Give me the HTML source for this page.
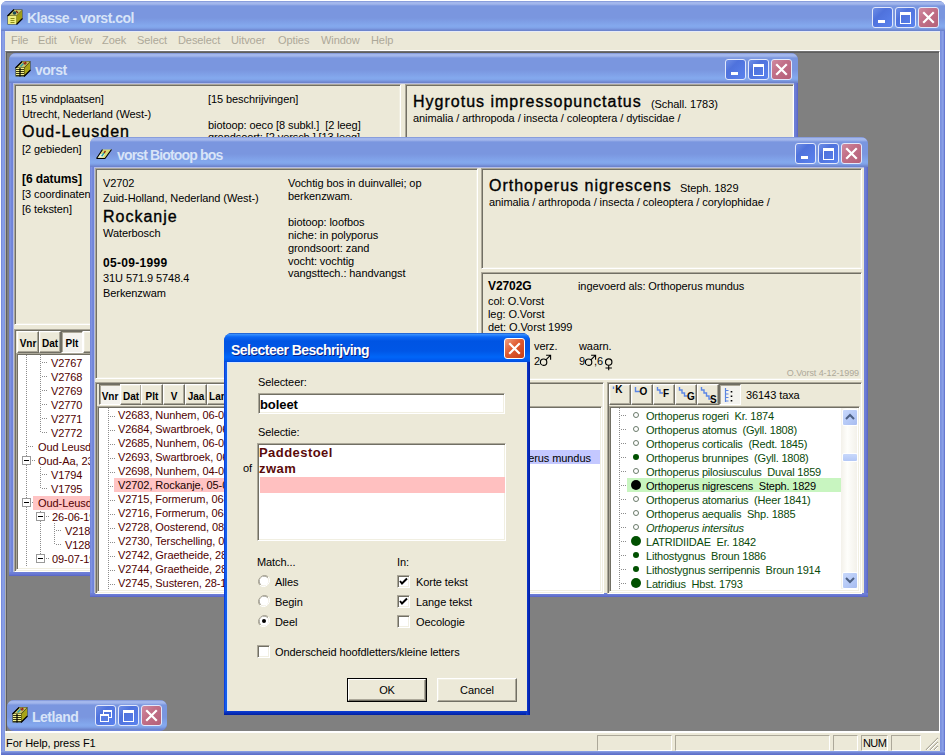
<!DOCTYPE html><html><head><meta charset="utf-8"><style>
*{box-sizing:content-box}
body{margin:0;width:945px;height:755px;overflow:hidden;position:relative;background:#fff;font-family:"Liberation Sans",sans-serif;font-size:11px;color:#000}
.a{position:absolute}
.t{position:absolute;white-space:pre;line-height:14px;font-size:11px;letter-spacing:-0.08px}
.sk{position:absolute;border-style:solid;border-width:1px;border-color:#aca899 #fff #fff #aca899;box-shadow:inset 1px 1px 0 #716f64, inset -1px -1px 0 #f1efe2}
.rb{position:absolute;background:#ece9d8;border-style:solid;border-width:1px;border-color:#fff #716f64 #716f64 #fff;box-shadow:inset -1px -1px 0 #aca899, inset 1px 1px 0 #f1efe2}
.big{font-size:16px;font-weight:normal;line-height:18px;letter-spacing:1px;-webkit-text-stroke:0.35px #000}
.tt{position:absolute;white-space:pre;font-size:14px;font-weight:bold;color:#d8e4f8;line-height:18px;letter-spacing:-0.5px}
</style></head><body><div class="a" style="left:1px;top:1px;width:944px;height:754px;background:linear-gradient(to right,#6f83d6,#8fa5ea 2px,#7b91de 4px,#7b91de 940px,#8fa5ea 942px,#5a6cc8 944px);border-radius:6px 6px 0 0"></div>
<div class="a" style="left:1px;top:1px;width:944px;height:30px;background:linear-gradient(to bottom,#6f84cc 0px,#a3b7ec 1px,#a3b7ec 3px,#7a96df 5px,#7a96df 17px,#84a9ee 25px,#80a2e8 27px,#7089d2 29px,#6a80c8 30px);border-radius:6px 6px 0 0"></div>
<div class="a" style="left:1px;top:751px;width:944px;height:4px;background:linear-gradient(#8fa5ea,#6b7fd0 2px,#5a6cc8)"></div>
<svg class="a" style="left:7px;top:9px" width="16" height="16" viewBox="0 0 16 16"><path d="M0.5 6.5 L6.5 0.5 L15.5 0.5 L15.5 9.5 L9.5 15.5 L0.5 15.5 Z" fill="#4a4a18"/><rect x="1" y="7" width="8.5" height="8" fill="#eeee80"/><path d="M9.5 7 L15 1.5 L15 9.5 L9.5 15 Z" fill="#a09c14"/><path d="M1.5 6.5 L7 1 L15 1 L9.5 6.5 Z" fill="#c8c468"/><path d="M3.5 9.5 H7.5 M3.5 11.5 H7.5 M3.5 13.5 H7.5" stroke="#8c8c18" stroke-width="1"/><circle cx="7.5" cy="4" r="1.8" fill="#1a4a58"/><path d="M9 2 L11 4" stroke="#7a2010" stroke-width="1.2"/><path d="M0.5 7 L7 0.5 M9.5 15.5 L15.5 9.5" stroke="#000" stroke-width="1.2"/></svg>
<div class="tt" style="left:27px;top:9px;">Klasse - vorst.col</div>
<div class="a" style="left:872px;top:7px;width:19px;height:19px;border:1px solid #e2e8fb;border-radius:3px;background:linear-gradient(135deg,#6f8fe6 0%,#4f72dc 35%,#5a82ee 100%)">
<div class="a" style="left:5px;top:12px;width:7px;height:3px;background:#fff"></div>
</div>
<div class="a" style="left:895px;top:7px;width:19px;height:19px;border:1px solid #e2e8fb;border-radius:3px;background:linear-gradient(135deg,#6f8fe6 0%,#4f72dc 35%,#5a82ee 100%)">
<div class="a" style="left:4px;top:4px;width:9px;height:8px;border:1px solid #fff;border-top:3px solid #fff"></div>
</div>
<div class="a" style="left:918px;top:7px;width:19px;height:19px;border:1px solid #e2e8fb;border-radius:3px;background:linear-gradient(135deg,#d08aa0 0%,#c27088 40%,#b56078 100%)">
<svg width="19" height="19" style="position:absolute;left:0;top:0"><path d="M5 5 L14 14 M14 5 L5 14" stroke="#fff" stroke-width="2.2" stroke-linecap="square"/></svg>
</div>
<div class="a" style="left:5px;top:31px;width:935px;height:20px;background:#ece9d8;border-top:1px solid #e6ebf8;border-bottom:1px solid #fff;box-sizing:border-box"></div>
<div class="t" style="left:11px;top:33px;color:#aca899">File</div>
<div class="t" style="left:38px;top:33px;color:#aca899">Edit</div>
<div class="t" style="left:69px;top:33px;color:#aca899">View</div>
<div class="t" style="left:102px;top:33px;color:#aca899">Zoek</div>
<div class="t" style="left:137px;top:33px;color:#aca899">Select</div>
<div class="t" style="left:178px;top:33px;color:#aca899">Deselect</div>
<div class="t" style="left:231px;top:33px;color:#aca899">Uitvoer</div>
<div class="t" style="left:278px;top:33px;color:#aca899">Opties</div>
<div class="t" style="left:321px;top:33px;color:#aca899">Window</div>
<div class="t" style="left:371px;top:33px;color:#aca899">Help</div>
<div class="a" style="left:5px;top:51px;width:935px;height:680px;background:#808080;border-top:1px solid #707070;border-left:1px solid #b0b0b0;border-right:1px solid #fff;box-shadow:inset 1px 1px 0 #5e5e5e;box-sizing:border-box"></div>
<div class="a" style="left:5px;top:731px;width:935px;height:20px;background:#ece9d8;border-top:2px solid #fff;box-sizing:border-box"></div>
<div class="t" style="left:6px;top:736px;">For Help, press F1</div>
<div class="a" style="left:597px;top:735px;width:73px;height:14px;border:1px solid;border-color:#aca899 #fff #fff #aca899"></div>
<div class="a" style="left:675px;top:735px;width:153px;height:14px;border:1px solid;border-color:#aca899 #fff #fff #aca899"></div>
<div class="a" style="left:833px;top:735px;width:23px;height:14px;border:1px solid;border-color:#aca899 #fff #fff #aca899"></div>
<div class="a" style="left:861px;top:735px;width:25px;height:14px;border:1px solid;border-color:#aca899 #fff #fff #aca899"></div>
<div class="a" style="left:891px;top:735px;width:28px;height:14px;border:1px solid;border-color:#aca899 #fff #fff #aca899"></div>
<div class="t" style="left:863px;top:736px;letter-spacing:-0.6px">NUM</div>
<svg class="a" style="left:925px;top:737px" width="14" height="13" viewBox="0 0 14 13"><path d="M13 1 L1 13 M13 5 L5 13 M13 9 L9 13" stroke="#aca899" stroke-width="1.2"/><path d="M13 2 L2 13 M13 6 L6 13 M13 10 L10 13" stroke="#fff" stroke-width="1"/></svg>
<div class="a" style="left:9px;top:53px;width:789px;height:523px;background:#7086da;border-radius:7px 7px 0 0"></div>
<div class="a" style="left:9px;top:53px;width:789px;height:30px;background:linear-gradient(to bottom,#6f84cc 0px,#a3b7ec 1px,#a3b7ec 3px,#7a96df 5px,#7a96df 17px,#84a9ee 25px,#80a2e8 27px,#7089d2 29px,#6a80c8 30px);border-radius:7px 7px 0 0"></div>
<div class="a" style="left:9px;top:83px;width:4px;height:493px;background:linear-gradient(to right,#6070d0,#8a9ee8 1px,#7488dc 2px,#6e82d8 4px)"></div>
<div class="a" style="left:794px;top:83px;width:4px;height:493px;background:linear-gradient(to right,#6e80d8,#6a7ad4 2px,#5864c4 4px)"></div>
<div class="a" style="left:9px;top:572px;width:789px;height:4px;background:linear-gradient(to bottom,#6e80d8,#6a7ad4 2px,#5864c4 4px)"></div>
<div class="a" style="left:771px;top:59px;width:19px;height:19px;border:1px solid #e2e8fb;border-radius:3px;background:linear-gradient(135deg,#d08aa0 0%,#c27088 40%,#b56078 100%)">
<svg width="19" height="19" style="position:absolute;left:0;top:0"><path d="M5 5 L14 14 M14 5 L5 14" stroke="#fff" stroke-width="2.2" stroke-linecap="square"/></svg>
</div>
<div class="a" style="left:748px;top:59px;width:19px;height:19px;border:1px solid #e2e8fb;border-radius:3px;background:linear-gradient(135deg,#6f8fe6 0%,#4f72dc 35%,#5a82ee 100%)">
<div class="a" style="left:4px;top:4px;width:9px;height:8px;border:1px solid #fff;border-top:3px solid #fff"></div>
</div>
<div class="a" style="left:725px;top:59px;width:19px;height:19px;border:1px solid #e2e8fb;border-radius:3px;background:linear-gradient(135deg,#6f8fe6 0%,#4f72dc 35%,#5a82ee 100%)">
<div class="a" style="left:5px;top:12px;width:7px;height:3px;background:#fff"></div>
</div>
<svg class="a" style="left:15px;top:60px" width="16" height="17" viewBox="0 0 16 17"><path d="M0.5 7.5 L7 1 L15.5 1 L15.5 10 L9 16.5 L0.5 16.5 Z" fill="#3a3a10"/><path d="M9.5 8 L15 2.2 L15 10 L9.5 15.8 Z" fill="#a8a418"/><path d="M1.5 7.5 L7.5 1.5 L15 1.5 L9 7.5 Z" fill="#c8c468"/><path d="M1 8.5 H9 M1 10.5 H9 M1 12.5 H9 M1 14.5 H9" stroke="#f0f090" stroke-width="1.2"/><path d="M5 8 V16.5" stroke="#000" stroke-width="1.2"/><path d="M5 6 L8 3 L9 4 L6 7 Z" fill="#20a0b0"/><path d="M8.5 2.5 L10.5 4.5 M10 2 L11.5 3.5" stroke="#902010" stroke-width="1.2"/><path d="M0.5 8 L7 1.5 M9 16.5 L15.5 10" stroke="#000" stroke-width="1.2"/></svg>
<div class="tt" style="left:35px;top:61px;">vorst</div>
<div class="a" style="left:13px;top:83px;width:781px;height:489px;background:#ece9d8;border-left:1px solid #b4bde6;border-top:1px solid #b4bde6;box-sizing:border-box"></div>
<div class="sk" style="left:14px;top:84px;width:385px;height:239px;background:#ece9d8;"></div>
<div class="sk" style="left:405px;top:84px;width:387px;height:58px;background:#ece9d8;"></div>
<div class="t" style="left:22px;top:92px;">[15 vindplaatsen]</div>
<div class="t" style="left:22px;top:107px;">Utrecht, Nederland (West-)</div>
<div class="t big" style="left:22px;top:123px;">Oud-Leusden</div>
<div class="t" style="left:22px;top:142px;">[2 gebieden]</div>
<div class="t" style="left:22px;top:172px;font-weight:bold;font-size:12px">[6 datums]</div>
<div class="t" style="left:22px;top:187px;">[3 coordinaten</div>
<div class="t" style="left:22px;top:202px;">[6 teksten]</div>
<div class="t" style="left:208px;top:92px;">[15 beschrijvingen]</div>
<div class="t" style="left:208px;top:118px;">biotoop: oeco [8 subkl.]  [2 leeg]</div>
<div class="t" style="left:208px;top:130px;">grondsoort: [2 versch.] [13 leeg]</div>
<div class="t big" style="left:413px;top:93px;">Hygrotus impressopunctatus</div>
<div class="t" style="left:651px;top:97px;">(Schall. 1783)</div>
<div class="t" style="left:413px;top:111px;">animalia / arthropoda / insecta / coleoptera / dytiscidae /</div>
<div class="sk" style="left:14px;top:329px;width:78px;height:241px;background:#ece9d8;"></div>
<div class="a" style="left:16px;top:331px;width:76px;height:24px;overflow:hidden;">
<div class="rb" style="left:1px;top:0px;width:20px;height:20px">
<div class="a" style="left:0;top:2px;width:20px;height:20px;text-align:center;line-height:20px;font-weight:bold;font-size:10px;">Vnr</div>
</div>
<div class="rb" style="left:23px;top:0px;width:20px;height:20px">
<div class="a" style="left:0;top:2px;width:20px;height:20px;text-align:center;line-height:20px;font-weight:bold;font-size:10px;">Dat</div>
</div>
<div class="a" style="left:45px;top:0px;width:20px;height:20px;background:#f4f3ee;border:1px solid;border-color:#716f64 #fff #fff #716f64;box-shadow:inset 1px 1px 0 #aca899">
<div class="a" style="left:0;top:2px;width:20px;height:20px;text-align:center;line-height:20px;font-weight:bold;font-size:10px;">Plt</div>
</div>
<div class="rb" style="left:67px;top:0px;width:20px;height:20px">
</div>
</div>
<div class="sk" style="left:16px;top:353px;width:76px;height:215px;background:#fff;"></div>
<div class="a" style="left:18px;top:355px;width:74px;height:213px;overflow:hidden;">
<div class="a" style="left:8px;top:0px;width:1px;height:212px;background:repeating-linear-gradient(to bottom,#8c8c8c 0 1px,transparent 1px 2px)"></div>
<div class="a" style="left:22px;top:0px;width:1px;height:78px;background:repeating-linear-gradient(to bottom,#8c8c8c 0 1px,transparent 1px 2px)"></div>
<div class="a" style="left:22px;top:112px;width:1px;height:22px;background:repeating-linear-gradient(to bottom,#8c8c8c 0 1px,transparent 1px 2px)"></div>
<div class="a" style="left:22px;top:154px;width:1px;height:50px;background:repeating-linear-gradient(to bottom,#8c8c8c 0 1px,transparent 1px 2px)"></div>
<div class="a" style="left:36px;top:168px;width:1px;height:22px;background:repeating-linear-gradient(to bottom,#8c8c8c 0 1px,transparent 1px 2px)"></div>
<div class="a" style="left:24px;top:7px;width:6px;height:1px;background:repeating-linear-gradient(to right,#8c8c8c 0 1px,transparent 1px 2px)"></div>
<div class="t" style="left:33px;top:1px;color:#500000">V2767</div>
<div class="a" style="left:24px;top:21px;width:6px;height:1px;background:repeating-linear-gradient(to right,#8c8c8c 0 1px,transparent 1px 2px)"></div>
<div class="t" style="left:33px;top:15px;color:#500000">V2768</div>
<div class="a" style="left:24px;top:35px;width:6px;height:1px;background:repeating-linear-gradient(to right,#8c8c8c 0 1px,transparent 1px 2px)"></div>
<div class="t" style="left:33px;top:29px;color:#500000">V2769</div>
<div class="a" style="left:24px;top:49px;width:6px;height:1px;background:repeating-linear-gradient(to right,#8c8c8c 0 1px,transparent 1px 2px)"></div>
<div class="t" style="left:33px;top:43px;color:#500000">V2770</div>
<div class="a" style="left:24px;top:63px;width:6px;height:1px;background:repeating-linear-gradient(to right,#8c8c8c 0 1px,transparent 1px 2px)"></div>
<div class="t" style="left:33px;top:57px;color:#500000">V2771</div>
<div class="a" style="left:24px;top:77px;width:6px;height:1px;background:repeating-linear-gradient(to right,#8c8c8c 0 1px,transparent 1px 2px)"></div>
<div class="t" style="left:33px;top:71px;color:#500000">V2772</div>
<div class="a" style="left:10px;top:91px;width:6px;height:1px;background:repeating-linear-gradient(to right,#8c8c8c 0 1px,transparent 1px 2px)"></div>
<div class="t" style="left:20px;top:85px;color:#500000">Oud Leusd</div>
<div class="a" style="left:14px;top:105px;width:4px;height:1px;background:repeating-linear-gradient(to right,#8c8c8c 0 1px,transparent 1px 2px)"></div>
<div class="a" style="left:4px;top:101px;width:7px;height:7px;background:#fff;border:1px solid #9a9a9a"></div>
<div class="a" style="left:6px;top:105px;width:5px;height:1px;background:#000"></div>
<div class="t" style="left:20px;top:99px;color:#500000">Oud-Aa, 23</div>
<div class="a" style="left:24px;top:119px;width:6px;height:1px;background:repeating-linear-gradient(to right,#8c8c8c 0 1px,transparent 1px 2px)"></div>
<div class="t" style="left:33px;top:113px;color:#500000">V1794</div>
<div class="a" style="left:24px;top:133px;width:6px;height:1px;background:repeating-linear-gradient(to right,#8c8c8c 0 1px,transparent 1px 2px)"></div>
<div class="t" style="left:33px;top:127px;color:#500000">V1795</div>
<div class="a" style="left:14px;top:147px;width:4px;height:1px;background:repeating-linear-gradient(to right,#8c8c8c 0 1px,transparent 1px 2px)"></div>
<div class="a" style="left:4px;top:143px;width:7px;height:7px;background:#fff;border:1px solid #9a9a9a"></div>
<div class="a" style="left:6px;top:147px;width:5px;height:1px;background:#000"></div>
<div class="a" style="left:15px;top:141px;width:60px;height:14px;background:#ffc4c4"></div>
<div class="t" style="left:20px;top:141px;color:#500000">Oud-Leusd</div>
<div class="a" style="left:28px;top:161px;width:4px;height:1px;background:repeating-linear-gradient(to right,#8c8c8c 0 1px,transparent 1px 2px)"></div>
<div class="a" style="left:18px;top:157px;width:7px;height:7px;background:#fff;border:1px solid #9a9a9a"></div>
<div class="a" style="left:20px;top:161px;width:5px;height:1px;background:#000"></div>
<div class="t" style="left:34px;top:155px;color:#500000">26-06-19</div>
<div class="a" style="left:38px;top:175px;width:6px;height:1px;background:repeating-linear-gradient(to right,#8c8c8c 0 1px,transparent 1px 2px)"></div>
<div class="t" style="left:47px;top:169px;color:#500000">V218</div>
<div class="a" style="left:38px;top:189px;width:6px;height:1px;background:repeating-linear-gradient(to right,#8c8c8c 0 1px,transparent 1px 2px)"></div>
<div class="t" style="left:47px;top:183px;color:#500000">V128</div>
<div class="a" style="left:28px;top:203px;width:4px;height:1px;background:repeating-linear-gradient(to right,#8c8c8c 0 1px,transparent 1px 2px)"></div>
<div class="a" style="left:18px;top:199px;width:7px;height:7px;background:#fff;border:1px solid #9a9a9a"></div>
<div class="a" style="left:20px;top:203px;width:5px;height:1px;background:#000"></div>
<div class="t" style="left:34px;top:197px;color:#500000">09-07-19</div>
</div>
<div class="a" style="left:7px;top:700px;width:160px;height:31px;background:#7086da;border-radius:7px 7px 7px 7px"></div>
<div class="a" style="left:7px;top:700px;width:160px;height:30px;background:linear-gradient(to bottom,#6f84cc 0px,#a3b7ec 1px,#a3b7ec 3px,#7a96df 5px,#7a96df 17px,#84a9ee 25px,#80a2e8 27px,#7089d2 29px,#6a80c8 30px);border-radius:7px 7px 7px 7px"></div>
<div class="a" style="left:141px;top:705px;width:19px;height:19px;border:1px solid #e2e8fb;border-radius:3px;background:linear-gradient(135deg,#d08aa0 0%,#c27088 40%,#b56078 100%)">
<svg width="19" height="19" style="position:absolute;left:0;top:0"><path d="M5 5 L14 14 M14 5 L5 14" stroke="#fff" stroke-width="2.2" stroke-linecap="square"/></svg>
</div>
<div class="a" style="left:118px;top:705px;width:19px;height:19px;border:1px solid #e2e8fb;border-radius:3px;background:linear-gradient(135deg,#6f8fe6 0%,#4f72dc 35%,#5a82ee 100%)">
<div class="a" style="left:4px;top:4px;width:9px;height:8px;border:1px solid #fff;border-top:3px solid #fff"></div>
</div>
<div class="a" style="left:95px;top:705px;width:19px;height:19px;border:1px solid #e2e8fb;border-radius:3px;background:linear-gradient(135deg,#6f8fe6 0%,#4f72dc 35%,#5a82ee 100%)">
<div class="a" style="left:7px;top:4px;width:7px;height:5px;border:1px solid #fff;border-top:2px solid #fff"></div>
<div class="a" style="left:4px;top:8px;width:7px;height:5px;border:1px solid #fff;border-top:2px solid #fff;background:#5a7de2"></div>
</div>
<svg class="a" style="left:12px;top:706px" width="16" height="17" viewBox="0 0 16 17"><path d="M0.5 7.5 L7 1 L15.5 1 L15.5 10 L9 16.5 L0.5 16.5 Z" fill="#3a3a10"/><path d="M9.5 8 L15 2.2 L15 10 L9.5 15.8 Z" fill="#a8a418"/><path d="M1.5 7.5 L7.5 1.5 L15 1.5 L9 7.5 Z" fill="#c8c468"/><path d="M1 8.5 H9 M1 10.5 H9 M1 12.5 H9 M1 14.5 H9" stroke="#f0f090" stroke-width="1.2"/><path d="M5 8 V16.5" stroke="#000" stroke-width="1.2"/><path d="M5 6 L8 3 L9 4 L6 7 Z" fill="#20a0b0"/><path d="M8.5 2.5 L10.5 4.5 M10 2 L11.5 3.5" stroke="#902010" stroke-width="1.2"/><path d="M0.5 8 L7 1.5 M9 16.5 L15.5 10" stroke="#000" stroke-width="1.2"/></svg>
<div class="tt" style="left:32px;top:708px;">Letland</div>
<div class="a" style="left:90px;top:137px;width:778px;height:460px;background:#7086da;border-radius:7px 7px 0 0"></div>
<div class="a" style="left:90px;top:137px;width:778px;height:30px;background:linear-gradient(to bottom,#6f84cc 0px,#a3b7ec 1px,#a3b7ec 3px,#7a96df 5px,#7a96df 17px,#84a9ee 25px,#80a2e8 27px,#7089d2 29px,#6a80c8 30px);border-radius:7px 7px 0 0"></div>
<div class="a" style="left:90px;top:167px;width:4px;height:430px;background:linear-gradient(to right,#6070d0,#8a9ee8 1px,#7488dc 2px,#6e82d8 4px)"></div>
<div class="a" style="left:864px;top:167px;width:4px;height:430px;background:linear-gradient(to right,#6e80d8,#6a7ad4 2px,#5864c4 4px)"></div>
<div class="a" style="left:90px;top:593px;width:778px;height:4px;background:linear-gradient(to bottom,#6e80d8,#6a7ad4 2px,#5864c4 4px)"></div>
<div class="a" style="left:841px;top:143px;width:19px;height:19px;border:1px solid #e2e8fb;border-radius:3px;background:linear-gradient(135deg,#d08aa0 0%,#c27088 40%,#b56078 100%)">
<svg width="19" height="19" style="position:absolute;left:0;top:0"><path d="M5 5 L14 14 M14 5 L5 14" stroke="#fff" stroke-width="2.2" stroke-linecap="square"/></svg>
</div>
<div class="a" style="left:818px;top:143px;width:19px;height:19px;border:1px solid #e2e8fb;border-radius:3px;background:linear-gradient(135deg,#6f8fe6 0%,#4f72dc 35%,#5a82ee 100%)">
<div class="a" style="left:4px;top:4px;width:9px;height:8px;border:1px solid #fff;border-top:3px solid #fff"></div>
</div>
<div class="a" style="left:795px;top:143px;width:19px;height:19px;border:1px solid #e2e8fb;border-radius:3px;background:linear-gradient(135deg,#6f8fe6 0%,#4f72dc 35%,#5a82ee 100%)">
<div class="a" style="left:5px;top:12px;width:7px;height:3px;background:#fff"></div>
</div>
<svg class="a" style="left:96px;top:145px" width="16" height="16" viewBox="0 0 16 16"><path d="M0.5 13.5 L6.5 4.5 L15.5 4.5 L9 13.5 Z" fill="#d8d870"/><path d="M1.5 12.5 L4 9 L9 9 L7 12.5 Z" fill="#e8f0e0"/><path d="M5 11 L7.5 7.5 L8.5 8.5 L6.5 11.5 Z" fill="#20a0a8"/><path d="M7.5 7.5 L9 5.5 L10 6.5 L8.5 8.5 Z" fill="#902010"/><path d="M0.5 13.5 L6.5 4.5 M9 13.5 L15.5 4.5 M0.5 13.5 H9" stroke="#000" stroke-width="1.1" fill="none"/></svg>
<div class="tt" style="left:117px;top:146px;letter-spacing:-0.85px">vorst Biotoop bos</div>
<div class="a" style="left:94px;top:167px;width:770px;height:426px;background:#ece9d8;border-left:1px solid #b4bde6;border-top:1px solid #b4bde6;box-sizing:border-box"></div>
<div class="sk" style="left:95px;top:168px;width:381px;height:209px;background:#ece9d8;"></div>
<div class="t" style="left:103px;top:176px;">V2702</div>
<div class="t" style="left:103px;top:191px;">Zuid-Holland, Nederland (West-)</div>
<div class="t big" style="left:103px;top:208px;">Rockanje</div>
<div class="t" style="left:103px;top:226px;">Waterbosch</div>
<div class="t" style="left:103px;top:256px;font-weight:bold;font-size:12px;letter-spacing:0.3px">05-09-1999</div>
<div class="t" style="left:103px;top:271px;">31U 571.9 5748.4</div>
<div class="t" style="left:103px;top:286px;">Berkenzwam</div>
<div class="t" style="left:288px;top:176px;">Vochtig bos in duinvallei; op</div>
<div class="t" style="left:288px;top:189px;">berkenzwam.</div>
<div class="t" style="left:288px;top:215px;">biotoop: loofbos</div>
<div class="t" style="left:288px;top:228px;">niche: in polyporus</div>
<div class="t" style="left:288px;top:241px;">grondsoort: zand</div>
<div class="t" style="left:288px;top:254px;">vocht: vochtig</div>
<div class="t" style="left:288px;top:266px;">vangsttech.: handvangst</div>
<div class="sk" style="left:481px;top:168px;width:379px;height:99px;background:#ece9d8;"></div>
<div class="t big" style="left:489px;top:177px;">Orthoperus nigrescens</div>
<div class="t" style="left:680px;top:181px;">Steph. 1829</div>
<div class="t" style="left:489px;top:195px;">animalia / arthropoda / insecta / coleoptera / corylophidae /</div>
<div class="sk" style="left:481px;top:272px;width:379px;height:106px;background:#ece9d8;"></div>
<div class="t" style="left:488px;top:279px;font-weight:bold;font-size:12px">V2702G</div>
<div class="t" style="left:578px;top:279px;">ingevoerd als: Orthoperus mundus</div>
<div class="t" style="left:488px;top:294px;">col: O.Vorst</div>
<div class="t" style="left:488px;top:307px;">leg: O.Vorst</div>
<div class="t" style="left:488px;top:320px;">det: O.Vorst 1999</div>
<div class="t" style="left:534px;top:339px;">verz.</div>
<div class="t" style="left:579px;top:339px;">waarn.</div>
<div class="t" style="left:534px;top:354px;">2</div>
<svg class="a" style="left:538px;top:353px" width="14" height="14" viewBox="0 0 14 14"><circle cx="5.600000000000023" cy="9.199999999999989" r="3.2" stroke="#000" stroke-width="1.15" fill="none"/><path d="M7.900000000000023 6.899999999999989 L12.100000000000023 2.6999999999999886 M8.100000000000023 2.1999999999999886 H12.600000000000023 V6.699999999999989" stroke="#000" stroke-width="1.1" fill="none"/></svg>
<div class="t" style="left:579px;top:354px;">9</div>
<svg class="a" style="left:583px;top:353px" width="14" height="14" viewBox="0 0 14 14"><circle cx="5.600000000000023" cy="9.199999999999989" r="3.2" stroke="#000" stroke-width="1.15" fill="none"/><path d="M7.900000000000023 6.899999999999989 L12.100000000000023 2.6999999999999886 M8.100000000000023 2.1999999999999886 H12.600000000000023 V6.699999999999989" stroke="#000" stroke-width="1.1" fill="none"/></svg>
<div class="t" style="left:594px;top:354px;">,6</div>
<svg class="a" style="left:603px;top:357px" width="10" height="14" viewBox="0 0 10 14"><circle cx="5.7000000000000455" cy="5" r="3.2" stroke="#000" stroke-width="1.15" fill="none"/><path d="M5.7000000000000455 8.3 V13.3 M2.5000000000000453 11 H8.900000000000045" stroke="#000" stroke-width="1.1" fill="none"/></svg>
<div class="t" style="left:700px;top:366px;color:#aca899;width:159px;text-align:right;font-size:9px">O.Vorst 4-12-1999</div>
<div class="sk" style="left:95px;top:382px;width:238px;height:210px;background:#ece9d8;"></div>
<div class="a" style="left:98px;top:383px;width:230px;height:23px;overflow:hidden;">
<div class="a" style="left:1px;top:1px;width:20px;height:19px;background:#f4f3ee;border:1px solid;border-color:#716f64 #fff #fff #716f64;box-shadow:inset 1px 1px 0 #aca899">
<div class="a" style="left:0;top:2px;width:20px;height:19px;text-align:center;line-height:19px;font-weight:bold;font-size:10px;">Vnr</div>
</div>
<div class="rb" style="left:22px;top:1px;width:20px;height:19px">
<div class="a" style="left:0;top:2px;width:20px;height:19px;text-align:center;line-height:19px;font-weight:bold;font-size:10px;">Dat</div>
</div>
<div class="rb" style="left:43px;top:1px;width:20px;height:19px">
<div class="a" style="left:0;top:2px;width:20px;height:19px;text-align:center;line-height:19px;font-weight:bold;font-size:10px;">Plt</div>
</div>
<div class="rb" style="left:65px;top:1px;width:20px;height:19px">
<div class="a" style="left:0;top:2px;width:20px;height:19px;text-align:center;line-height:19px;font-weight:bold;font-size:10px;">V</div>
</div>
<div class="rb" style="left:87px;top:1px;width:20px;height:19px">
<div class="a" style="left:0;top:2px;width:20px;height:19px;text-align:center;line-height:19px;font-weight:bold;font-size:10px;">Jaa</div>
</div>
<div class="rb" style="left:109px;top:1px;width:20px;height:19px">
<div class="a" style="left:0;top:2px;width:20px;height:19px;text-align:center;line-height:19px;font-weight:bold;font-size:10px;">Lan</div>
</div>
<div class="rb" style="left:131px;top:1px;width:20px;height:19px">
</div>
<div class="rb" style="left:153px;top:1px;width:20px;height:19px">
</div>
</div>
<div class="sk" style="left:97px;top:406px;width:234px;height:184px;background:#fff;"></div>
<div class="a" style="left:99px;top:408px;width:232px;height:182px;overflow:hidden;">
<div class="a" style="left:9px;top:0px;width:1px;height:182px;background:repeating-linear-gradient(to bottom,#8c8c8c 0 1px,transparent 1px 2px)"></div>
<div class="a" style="left:11px;top:8px;width:5px;height:1px;background:repeating-linear-gradient(to right,#8c8c8c 0 1px,transparent 1px 2px)"></div>
<div class="t" style="left:19px;top:0px;color:#500000">V2683, Nunhem, 06-06-1999</div>
<div class="a" style="left:11px;top:22px;width:5px;height:1px;background:repeating-linear-gradient(to right,#8c8c8c 0 1px,transparent 1px 2px)"></div>
<div class="t" style="left:19px;top:14px;color:#500000">V2684, Swartbroek, 06-06-1999</div>
<div class="a" style="left:11px;top:36px;width:5px;height:1px;background:repeating-linear-gradient(to right,#8c8c8c 0 1px,transparent 1px 2px)"></div>
<div class="t" style="left:19px;top:28px;color:#500000">V2685, Nunhem, 06-06-1999</div>
<div class="a" style="left:11px;top:50px;width:5px;height:1px;background:repeating-linear-gradient(to right,#8c8c8c 0 1px,transparent 1px 2px)"></div>
<div class="t" style="left:19px;top:42px;color:#500000">V2693, Swartbroek, 06-06-1999</div>
<div class="a" style="left:11px;top:64px;width:5px;height:1px;background:repeating-linear-gradient(to right,#8c8c8c 0 1px,transparent 1px 2px)"></div>
<div class="t" style="left:19px;top:56px;color:#500000">V2698, Nunhem, 04-06-1999</div>
<div class="a" style="left:11px;top:78px;width:5px;height:1px;background:repeating-linear-gradient(to right,#8c8c8c 0 1px,transparent 1px 2px)"></div>
<div class="a" style="left:15px;top:70px;width:200px;height:14px;background:#ffc4c4"></div>
<div class="t" style="left:19px;top:70px;color:#200000">V2702, Rockanje, 05-09-1999</div>
<div class="a" style="left:11px;top:92px;width:5px;height:1px;background:repeating-linear-gradient(to right,#8c8c8c 0 1px,transparent 1px 2px)"></div>
<div class="t" style="left:19px;top:84px;color:#500000">V2715, Formerum, 06-09-1999</div>
<div class="a" style="left:11px;top:106px;width:5px;height:1px;background:repeating-linear-gradient(to right,#8c8c8c 0 1px,transparent 1px 2px)"></div>
<div class="t" style="left:19px;top:98px;color:#500000">V2716, Formerum, 06-09-1999</div>
<div class="a" style="left:11px;top:120px;width:5px;height:1px;background:repeating-linear-gradient(to right,#8c8c8c 0 1px,transparent 1px 2px)"></div>
<div class="t" style="left:19px;top:112px;color:#500000">V2728, Oosterend, 08-09-1999</div>
<div class="a" style="left:11px;top:134px;width:5px;height:1px;background:repeating-linear-gradient(to right,#8c8c8c 0 1px,transparent 1px 2px)"></div>
<div class="t" style="left:19px;top:126px;color:#500000">V2730, Terschelling, 09-09-1999</div>
<div class="a" style="left:11px;top:148px;width:5px;height:1px;background:repeating-linear-gradient(to right,#8c8c8c 0 1px,transparent 1px 2px)"></div>
<div class="t" style="left:19px;top:140px;color:#500000">V2742, Graetheide, 28-09-1999</div>
<div class="a" style="left:11px;top:162px;width:5px;height:1px;background:repeating-linear-gradient(to right,#8c8c8c 0 1px,transparent 1px 2px)"></div>
<div class="t" style="left:19px;top:154px;color:#500000">V2744, Graetheide, 28-09-1999</div>
<div class="a" style="left:11px;top:176px;width:5px;height:1px;background:repeating-linear-gradient(to right,#8c8c8c 0 1px,transparent 1px 2px)"></div>
<div class="t" style="left:19px;top:168px;color:#500000">V2745, Susteren, 28-10-1999</div>
</div>
<div class="sk" style="left:335px;top:382px;width:267px;height:210px;background:#ece9d8;"></div>
<div class="sk" style="left:337px;top:406px;width:263px;height:184px;background:#fff;"></div>
<div class="a" style="left:339px;top:408px;width:261px;height:182px;overflow:hidden;">
<div class="a" style="left:-2px;top:42px;width:265px;height:14px;background:#c4c8ff"></div>
<div class="t" style="left:156px;top:43px;">Orthoperus mundus</div>
</div>
<div class="sk" style="left:607px;top:382px;width:253px;height:210px;background:#ece9d8;"></div>
<div class="rb" style="left:609px;top:384px;width:20px;height:19px">
</div>
<svg class="a" style="left:609px;top:384px" width="22" height="21" viewBox="0 0 22 21"><path d="M4.5 2.5 V5" stroke="#5b86e6" stroke-width="1.4" fill="none"/></svg>
<div class="t" style="left:615.3px;top:384px;font-weight:bold;font-size:10px;line-height:12px">K</div>
<div class="rb" style="left:631px;top:384px;width:20px;height:19px">
</div>
<svg class="a" style="left:631px;top:384px" width="22" height="21" viewBox="0 0 22 21"><path d="M4.5 3 V7.5 H9" stroke="#5b86e6" stroke-width="1.4" fill="none"/></svg>
<div class="t" style="left:639.4px;top:386px;font-weight:bold;font-size:10px;line-height:12px">O</div>
<div class="rb" style="left:653px;top:384px;width:20px;height:19px">
</div>
<svg class="a" style="left:653px;top:384px" width="22" height="21" viewBox="0 0 22 21"><path d="M4.5 3 V6 H7 V9 H10" stroke="#5b86e6" stroke-width="1.4" fill="none"/></svg>
<div class="t" style="left:663px;top:388px;font-weight:bold;font-size:10px;line-height:12px">F</div>
<div class="rb" style="left:675px;top:384px;width:20px;height:19px">
</div>
<svg class="a" style="left:675px;top:384px" width="22" height="21" viewBox="0 0 22 21"><path d="M4.5 3 V6 H7 V9 H9.5 V12 H12.5" stroke="#5b86e6" stroke-width="1.4" fill="none"/></svg>
<div class="t" style="left:687.1px;top:390.5px;font-weight:bold;font-size:10px;line-height:12px">G</div>
<div class="rb" style="left:697px;top:384px;width:20px;height:19px">
</div>
<svg class="a" style="left:697px;top:384px" width="22" height="21" viewBox="0 0 22 21"><path d="M4.5 3 V6 H7 V9 H9.5 V12 H12 V15 H14.5" stroke="#5b86e6" stroke-width="1.4" fill="none"/></svg>
<div class="t" style="left:710px;top:393.5px;font-weight:bold;font-size:10px;line-height:12px">S</div>
<div class="a" style="left:719px;top:384px;width:20px;height:19px;background:#f4f3ee;border:1px solid;border-color:#716f64 #fff #fff #716f64;box-shadow:inset 1px 1px 0 #aca899">
</div>
<svg class="a" style="left:722px;top:387px" width="16" height="16" viewBox="0 0 16 16"><path d="M3.5 1 v14 M3.5 3.5 h3 M3.5 7 h3 M3.5 10.5 h3 M3.5 14 h3" stroke="#5a84e0" stroke-width="1.2"/><path d="M9.5 4 v1.5 M9.5 8.5 v1.5 M9.5 13 v1.5" stroke="#000" stroke-width="1.6"/></svg>
<div class="t" style="left:746px;top:388px;">36143 taxa</div>
<div class="sk" style="left:609px;top:406px;width:249px;height:184px;background:#fff;"></div>
<div class="a" style="left:611px;top:408px;width:247px;height:182px;overflow:hidden;">
<div class="a" style="left:8px;top:0px;width:1px;height:182px;background:repeating-linear-gradient(to bottom,#8c8c8c 0 1px,transparent 1px 2px)"></div>
<div class="a" style="left:10px;top:7px;width:6px;height:1px;background:repeating-linear-gradient(to right,#8c8c8c 0 1px,transparent 1px 2px)"></div>
<div class="a" style="left:22px;top:4px;width:4px;height:4px;border:1px solid #6a7a6a;border-radius:50%"></div>
<div class="t" style="left:35px;top:1px;color:#0a4a0a;letter-spacing:-0.2px">Orthoperus rogeri  Kr. 1874</div>
<div class="a" style="left:10px;top:21px;width:6px;height:1px;background:repeating-linear-gradient(to right,#8c8c8c 0 1px,transparent 1px 2px)"></div>
<div class="a" style="left:22px;top:18px;width:4px;height:4px;border:1px solid #6a7a6a;border-radius:50%"></div>
<div class="t" style="left:35px;top:15px;color:#0a4a0a;letter-spacing:-0.2px">Orthoperus atomus  (Gyll. 1808)</div>
<div class="a" style="left:10px;top:35px;width:6px;height:1px;background:repeating-linear-gradient(to right,#8c8c8c 0 1px,transparent 1px 2px)"></div>
<div class="a" style="left:22px;top:32px;width:4px;height:4px;border:1px solid #6a7a6a;border-radius:50%"></div>
<div class="t" style="left:35px;top:29px;color:#0a4a0a;letter-spacing:-0.2px">Orthoperus corticalis  (Redt. 1845)</div>
<div class="a" style="left:10px;top:49px;width:6px;height:1px;background:repeating-linear-gradient(to right,#8c8c8c 0 1px,transparent 1px 2px)"></div>
<div class="a" style="left:22px;top:46px;width:6px;height:6px;background:#005000;border-radius:50%"></div>
<div class="t" style="left:35px;top:43px;color:#0a4a0a;letter-spacing:-0.2px">Orthoperus brunnipes  (Gyll. 1808)</div>
<div class="a" style="left:10px;top:63px;width:6px;height:1px;background:repeating-linear-gradient(to right,#8c8c8c 0 1px,transparent 1px 2px)"></div>
<div class="a" style="left:22px;top:60px;width:4px;height:4px;border:1px solid #6a7a6a;border-radius:50%"></div>
<div class="t" style="left:35px;top:57px;color:#0a4a0a;letter-spacing:-0.2px">Orthoperus pilosiusculus  Duval 1859</div>
<div class="a" style="left:10px;top:77px;width:6px;height:1px;background:repeating-linear-gradient(to right,#8c8c8c 0 1px,transparent 1px 2px)"></div>
<div class="a" style="left:16px;top:70px;width:214px;height:14px;background:#c8f5c0"></div>
<div class="a" style="left:20px;top:72px;width:10px;height:10px;background:#000;border-radius:50%"></div>
<div class="t" style="left:35px;top:71px;color:#000;letter-spacing:-0.2px">Orthoperus nigrescens  Steph. 1829</div>
<div class="a" style="left:10px;top:91px;width:6px;height:1px;background:repeating-linear-gradient(to right,#8c8c8c 0 1px,transparent 1px 2px)"></div>
<div class="a" style="left:22px;top:88px;width:4px;height:4px;border:1px solid #6a7a6a;border-radius:50%"></div>
<div class="t" style="left:35px;top:85px;color:#0a4a0a;letter-spacing:-0.2px">Orthoperus atomarius  (Heer 1841)</div>
<div class="a" style="left:10px;top:105px;width:6px;height:1px;background:repeating-linear-gradient(to right,#8c8c8c 0 1px,transparent 1px 2px)"></div>
<div class="a" style="left:22px;top:102px;width:4px;height:4px;border:1px solid #6a7a6a;border-radius:50%"></div>
<div class="t" style="left:35px;top:99px;color:#0a4a0a;letter-spacing:-0.2px">Orthoperus aequalis  Shp. 1885</div>
<div class="a" style="left:10px;top:119px;width:6px;height:1px;background:repeating-linear-gradient(to right,#8c8c8c 0 1px,transparent 1px 2px)"></div>
<div class="a" style="left:22px;top:116px;width:4px;height:4px;border:1px solid #6a7a6a;border-radius:50%"></div>
<div class="t" style="left:35px;top:113px;color:#0a4a0a;letter-spacing:-0.2px"><i>Orthoperus intersitus</i></div>
<div class="a" style="left:10px;top:133px;width:6px;height:1px;background:repeating-linear-gradient(to right,#8c8c8c 0 1px,transparent 1px 2px)"></div>
<div class="a" style="left:20px;top:128px;width:10px;height:10px;background:#005000;border-radius:50%"></div>
<div class="t" style="left:35px;top:127px;color:#0a4a0a;letter-spacing:-0.2px">LATRIDIIDAE  Er. 1842</div>
<div class="a" style="left:10px;top:147px;width:6px;height:1px;background:repeating-linear-gradient(to right,#8c8c8c 0 1px,transparent 1px 2px)"></div>
<div class="a" style="left:22px;top:144px;width:6px;height:6px;background:#005000;border-radius:50%"></div>
<div class="t" style="left:35px;top:141px;color:#0a4a0a;letter-spacing:-0.2px">Lithostygnus  Broun 1886</div>
<div class="a" style="left:10px;top:161px;width:6px;height:1px;background:repeating-linear-gradient(to right,#8c8c8c 0 1px,transparent 1px 2px)"></div>
<div class="a" style="left:22px;top:158px;width:6px;height:6px;background:#005000;border-radius:50%"></div>
<div class="t" style="left:35px;top:155px;color:#0a4a0a;letter-spacing:-0.2px">Lithostygnus serripennis  Broun 1914</div>
<div class="a" style="left:10px;top:175px;width:6px;height:1px;background:repeating-linear-gradient(to right,#8c8c8c 0 1px,transparent 1px 2px)"></div>
<div class="a" style="left:20px;top:170px;width:10px;height:10px;background:#005000;border-radius:50%"></div>
<div class="t" style="left:35px;top:169px;color:#0a4a0a;letter-spacing:-0.2px">Latridius  Hbst. 1793</div>
</div>
<div class="a" style="left:841px;top:408px;width:16px;height:181px;background:linear-gradient(to right,#f3f1ea,#fefefb 40%,#f3f1ea)"></div>
<div class="a" style="left:842px;top:409px;width:14px;height:15px;border:1px solid #fff;border-radius:2px;background:linear-gradient(135deg,#c8d8fb,#b4c8f6 60%,#a8bcf0)"></div>
<svg class="a" style="left:842px;top:409px" width="16" height="16" viewBox="0 0 16 16"><path d="M4 10 L8 6 L12 10" stroke="#4d6185" stroke-width="2" fill="none"/></svg>
<div class="a" style="left:842px;top:572px;width:14px;height:15px;border:1px solid #fff;border-radius:2px;background:linear-gradient(135deg,#c8d8fb,#b4c8f6 60%,#a8bcf0)"></div>
<svg class="a" style="left:842px;top:572px" width="16" height="16" viewBox="0 0 16 16"><path d="M4 6 L8 10 L12 6" stroke="#4d6185" stroke-width="2" fill="none"/></svg>
<div class="a" style="left:842px;top:453px;width:14px;height:7px;border:1px solid #fff;border-radius:2px;background:linear-gradient(#c8d8fb,#b4c8f6)"></div>
<div class="a" style="left:224px;top:333px;width:306px;height:382px;background:linear-gradient(to right,#0831d9,#166aee 2px,#0c3fd6 4px);border-radius:8px 8px 0 0"></div>
<div class="a" style="left:224px;top:333px;width:306px;height:29px;background:linear-gradient(to bottom,#0a3cb0 0px,#3d95ff 1px,#0a66f4 4px,#0054e3 8px,#0056e6 18px,#0066f8 24px,#005af0 27px,#0043d0 30px);border-radius:8px 8px 0 0"></div>
<div class="a" style="left:504px;top:338px;width:19px;height:19px;border:1px solid #ffffff;border-radius:3px;background:linear-gradient(135deg,#f0a080 0%,#e05a30 45%,#c63e18 100%)">
<svg width="19" height="19" style="position:absolute;left:0;top:0"><path d="M5 5 L14 14 M14 5 L5 14" stroke="#fff" stroke-width="2.2" stroke-linecap="square"/></svg>
</div>
<div class="a" style="left:224px;top:711px;width:306px;height:4px;background:linear-gradient(#0c3fd6,#001ea0)"></div>
<div class="a" style="left:526px;top:362px;width:4px;height:353px;background:linear-gradient(to right,#0c3fd6,#0a2ec0 2px,#001ea0)"></div>
<div class="t" style="left:231px;top:341px;font-size:14px;font-weight:bold;color:#fff;line-height:18px;letter-spacing:-0.55px;text-shadow:1px 1px 0 #0a1e80">Selecteer Beschrijving</div>
<div class="a" style="left:227px;top:362px;width:300px;height:349px;background:#ece9d8;border-left:1px solid #d8e6ff;border-top:1px solid #d8e6ff;box-sizing:border-box"></div>
<div class="t" style="left:258px;top:375px;">Selecteer:</div>
<div class="a" style="left:258px;top:393px;width:247px;height:21px;background:#fff;border:1px solid;border-color:#aca899 #fff #fff #aca899;box-shadow:inset 1px 1px 0 #716f64, inset -1px -1px 0 #f1efe2;box-sizing:border-box"></div>
<div class="t" style="left:260px;top:397px;font-weight:bold;font-size:13px;line-height:15px">boleet</div>
<div class="t" style="left:258px;top:425px;">Selectie:</div>
<div class="a" style="left:257px;top:443px;width:249px;height:98px;overflow:hidden;background:#fff;border:1px solid;border-color:#aca899 #fff #fff #aca899;box-shadow:inset 1px 1px 0 #716f64, inset -1px -1px 0 #f1efe2;box-sizing:border-box">
<div class="t" style="left:1px;top:1px;font-weight:bold;font-size:13px;color:#5a0a0a;line-height:15px;letter-spacing:0.45px">Paddestoel</div>
<div class="t" style="left:1px;top:17px;font-weight:bold;font-size:13px;color:#5a0a0a;line-height:15px;letter-spacing:0.45px">zwam</div>
<div class="a" style="left:2px;top:33px;width:245px;height:16px;background:#ffc0c0"></div>
</div>
<div class="t" style="left:243px;top:461px;">of</div>
<div class="t" style="left:257px;top:555px;">Match...</div>
<div class="t" style="left:397px;top:555px;">In:</div>
<svg class="a" style="left:258px;top:575px" width="12" height="12" viewBox="0 0 12 12"><path d="M10.2 1.8 A6 6 0 0 0 1.8 10.2" stroke="#aca899" stroke-width="1" fill="none"/><path d="M9.5 2.5 A5 5 0 0 0 2.5 9.5" stroke="#716f64" stroke-width="1" fill="none"/><path d="M1.8 10.2 A6 6 0 0 0 10.2 1.8" stroke="#fff" stroke-width="1" fill="none"/><circle cx="6" cy="6" r="4.5" fill="#fff"/></svg>
<div class="t" style="left:275px;top:575px;">Alles</div>
<svg class="a" style="left:258px;top:595px" width="12" height="12" viewBox="0 0 12 12"><path d="M10.2 1.8 A6 6 0 0 0 1.8 10.2" stroke="#aca899" stroke-width="1" fill="none"/><path d="M9.5 2.5 A5 5 0 0 0 2.5 9.5" stroke="#716f64" stroke-width="1" fill="none"/><path d="M1.8 10.2 A6 6 0 0 0 10.2 1.8" stroke="#fff" stroke-width="1" fill="none"/><circle cx="6" cy="6" r="4.5" fill="#fff"/></svg>
<div class="t" style="left:275px;top:595px;">Begin</div>
<svg class="a" style="left:258px;top:615px" width="12" height="12" viewBox="0 0 12 12"><path d="M10.2 1.8 A6 6 0 0 0 1.8 10.2" stroke="#aca899" stroke-width="1" fill="none"/><path d="M9.5 2.5 A5 5 0 0 0 2.5 9.5" stroke="#716f64" stroke-width="1" fill="none"/><path d="M1.8 10.2 A6 6 0 0 0 10.2 1.8" stroke="#fff" stroke-width="1" fill="none"/><circle cx="6" cy="6" r="4.5" fill="#fff"/><circle cx="6" cy="6" r="2" fill="#000"/></svg>
<div class="t" style="left:275px;top:615px;">Deel</div>
<div class="a" style="left:397px;top:575px;width:11px;height:11px;background:#fff;border:1px solid;border-color:#aca899 #fff #fff #aca899;box-shadow:inset 1px 1px 0 #716f64, inset -1px -1px 0 #f1efe2"></div>
<svg class="a" style="left:397px;top:575px" width="13" height="13" viewBox="0 0 13 13"><path d="M3 6 L5 8.5 L10 3.5" stroke="#000" stroke-width="2" fill="none"/></svg>
<div class="t" style="left:416px;top:575px;">Korte tekst</div>
<div class="a" style="left:397px;top:595px;width:11px;height:11px;background:#fff;border:1px solid;border-color:#aca899 #fff #fff #aca899;box-shadow:inset 1px 1px 0 #716f64, inset -1px -1px 0 #f1efe2"></div>
<svg class="a" style="left:397px;top:595px" width="13" height="13" viewBox="0 0 13 13"><path d="M3 6 L5 8.5 L10 3.5" stroke="#000" stroke-width="2" fill="none"/></svg>
<div class="t" style="left:416px;top:595px;">Lange tekst</div>
<div class="a" style="left:397px;top:615px;width:11px;height:11px;background:#fff;border:1px solid;border-color:#aca899 #fff #fff #aca899;box-shadow:inset 1px 1px 0 #716f64, inset -1px -1px 0 #f1efe2"></div>
<div class="t" style="left:416px;top:615px;">Oecologie</div>
<div class="a" style="left:257px;top:645px;width:11px;height:11px;background:#fff;border:1px solid;border-color:#aca899 #fff #fff #aca899;box-shadow:inset 1px 1px 0 #716f64, inset -1px -1px 0 #f1efe2"></div>
<div class="t" style="left:275px;top:645px;">Onderscheid hoofdletters/kleine letters</div>
<div class="a" style="left:347px;top:678px;width:78px;height:22px;border:1px solid #000;background:#ece9d8"></div>
<div class="a" style="left:348px;top:679px;width:76px;height:20px;border:1px solid;border-color:#fff #716f64 #716f64 #fff;box-shadow:inset -1px -1px 0 #aca899"></div>
<div class="t" style="left:348px;top:683px;width:78px;text-align:center">OK</div>
<div class="a" style="left:437px;top:678px;width:78px;height:22px;border:1px solid;border-color:#fff #716f64 #716f64 #fff;box-shadow:inset -1px -1px 0 #aca899, inset 1px 1px 0 #f1efe2;background:#ece9d8"></div>
<div class="t" style="left:437px;top:683px;width:80px;text-align:center">Cancel</div></body></html>
